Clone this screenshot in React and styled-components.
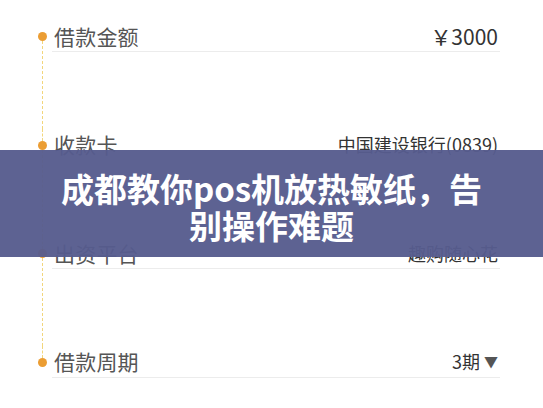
import React from "react";
import styled, { createGlobalStyle } from "styled-components";

const Global = createGlobalStyle`
  html, body { margin: 0; padding: 0; background: #fff; }
  body { font-family: "Noto Sans CJK SC", "Noto Sans", sans-serif; }
`;

const Page = styled.div`
  position: relative;
  width: 543px;
  height: 408px;
  overflow: hidden;
  background: #fff;
  box-sizing: border-box;
  padding: 20px 43px 0 38px;
`;

const List = styled.div`
  display: flex;
  flex-direction: column;
`;

const Row = styled.div`
  display: grid;
  grid-template-columns: 9px 1fr;
  column-gap: 5px;
  height: ${(p) => (p.$last ? "32px" : "108.5px")};
`;

const Rail = styled.div`
  display: flex;
  flex-direction: column;
  align-items: center;
`;

const Segment = styled.div`
  width: 0;
  border-left: 1px dashed ${(p) => (p.$hidden ? "transparent" : "#f2d67c")};
  flex: ${(p) => (p.$grow ? 1 : "none")};
  height: ${(p) => (p.$grow ? "auto" : "12px")};
`;

const Dot = styled.div`
  width: 9px;
  height: 9px;
  border-radius: 50%;
  background: #eb9d33;
  flex: none;
`;

const Content = styled.div`
  display: flex;
  flex-direction: column;
`;

const Line = styled.div`
  height: 32px;
  display: flex;
  align-items: center;
  justify-content: space-between;
  border-bottom: 1px solid #ececec;
  box-sizing: border-box;
  padding: 0 2px 0 2px;
`;

const Label = styled.span`
  font-size: 21px;
  color: #555;
  letter-spacing: 0.2px;
`;

const Value = styled.span`
  font-size: ${(p) => p.$size || 18}px;
  color: #333;
  display: flex;
  align-items: center;
  gap: 4px;
`;

const Caret = styled.span`
  font-size: 14px;
  color: #555;
`;

const Banner = styled.div`
  position: absolute;
  left: 0;
  right: 0;
  top: 150px;
  height: 107px;
  background: rgba(86, 92, 142, 0.96);
  display: flex;
  align-items: center;
  justify-content: center;
  box-sizing: border-box;
  padding: 6px 56px 0;
`;

const Title = styled.h1`
  margin: 0;
  color: #fff;
  font-size: 33px;
  font-weight: 700;
  line-height: 37px;
  text-align: center;
  font-family: "Noto Sans CJK SC", "Noto Sans", sans-serif;
`;

const rows = [
  { label: "借款金额", value: "￥3000", size: 21 },
  { label: "收款卡", value: "中国建设银行(0839)", size: 18 },
  { label: "出资平台", value: "趣购随心花", size: 18 },
  { label: "借款周期", value: "3期", size: 18, caret: true },
];

export default function App() {
  return (
    <>
      <Global />
      <Page>
        <List>
          {rows.map((r, i) => {
            const first = i === 0;
            const last = i === rows.length - 1;
            return (
              <Row key={r.label} $last={last}>
                <Rail>
                  <Segment $hidden={first} />
                  <Dot />
                  {!last && <Segment $grow />}
                </Rail>
                <Content>
                  <Line>
                    <Label>{r.label}</Label>
                    <Value $size={r.size}>
                      {r.value}
                      {r.caret && <Caret>▼</Caret>}
                    </Value>
                  </Line>
                </Content>
              </Row>
            );
          })}
        </List>
        <Banner>
          <Title>成都教你pos机放热敏纸，告别操作难题</Title>
        </Banner>
      </Page>
    </>
  );
}
